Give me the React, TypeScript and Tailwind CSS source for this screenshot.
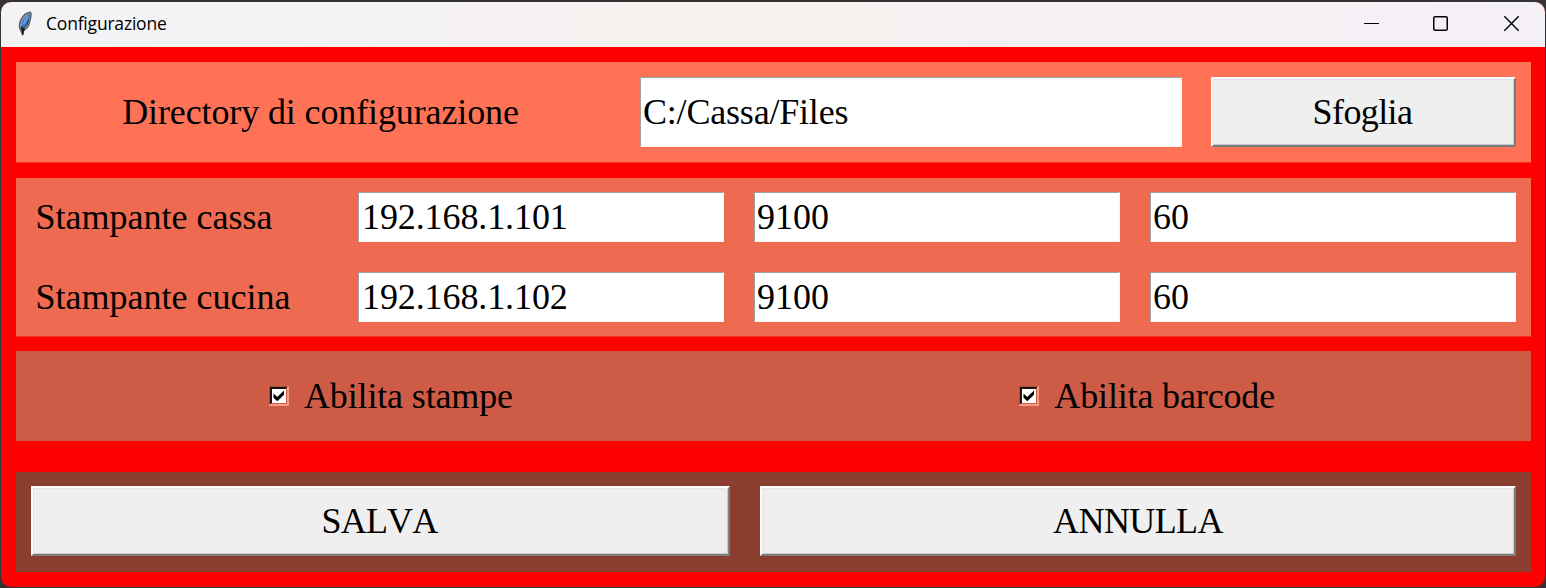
import { useState } from "react";

function Entry({ value, className }: { value: string; className: string }) {
  const [text, setText] = useState(value);
  return (
    <input
      value={text}
      onChange={(e) => setText(e.target.value)}
      className={`block min-w-0 rounded-none border border-t-[#a0a0a0] border-l-[#a0a0a0] border-r-[#fff4f0] border-b-[#fff4f0] bg-white text-[36px] leading-none text-black outline-none ${className}`}
    />
  );
}

function PushButton({ label, className }: { label: string; className: string }) {
  return (
    <button
      className={`flex items-center justify-center border-2 border-t-white border-l-white border-r-[#7c7c7c] border-b-[#7c7c7c] bg-[#efefef] text-[36px] leading-none text-black shadow-[inset_1px_1px_0_#e4e4e4,inset_-1px_-1px_0_#c8c8c8] ${className}`}
    >
      {label}
    </button>
  );
}

function CheckOption({ label }: { label: string }) {
  const [on, setOn] = useState(true);
  return (
    <button className="flex items-center text-[36px] leading-none tracking-[-0.15px] text-black" onClick={() => setOn(!on)}>
      <svg width="20" height="20" viewBox="0 0 20 20" className="mr-[15px]">
        <rect width="20" height="20" fill="#f59a88" />
        <path d="M0 19V0H19L18 1H1V18Z" fill="#a0523f" />
        <path d="M1 18V1H18V3H3V18Z" fill="#1c1210" />
        <rect x="3" y="3" width="14" height="14" fill="#fff" />
        <path d="M17 2V17H2V18H18V2Z" fill="#cd5b45" />
        {on && <path d="M4.5 7.5L8.3 11L15 4.5V8.7L8.3 15.2L4.5 11.8Z" fill="#000" />}
      </svg>
      <span>{label}</span>
    </button>
  );
}

function FeatherIcon() {
  return (
    <svg width="16" height="25" viewBox="0 0 16 25" className="relative -top-px">
      <path d="M13.6 1.2C9.4 1.6 5.6 5 3.7 9C1.9 13 1.9 17 3.8 19.6L5.6 23.6L6.8 19.4C10.8 17.6 12.4 14 13 10C13.5 7 15 4 13.6 1.2Z" fill="#8f989f" stroke="#55585b" strokeWidth="1.2" />
      <path d="M12.9 2.4C9.2 4.3 6 8 4.8 12L5.4 17.8C9.8 16 11.2 12 11.9 8.5C12.4 5.6 13.6 4.4 12.9 2.4Z" fill="#3576c6" />
      <path d="M11.6 3.8C8.8 6 6.8 9.2 5.8 12.8L7.6 13.2L11 7Z" fill="#5fa2ec" />
      <path d="M11.9 8.2C11 12 9.8 15 7 17" fill="none" stroke="#1f3957" strokeWidth="1" />
      <path d="M4.4 15.5L5.6 20.5L7.6 17.8" fill="#15181b" stroke="#15181b" strokeWidth="1.4" />
      <path d="M5.7 18V23.8" fill="none" stroke="#15181b" strokeWidth="1.6" />
    </svg>
  );
}

const printers = [
  { name: "Stampante cassa", ip: "192.168.1.101" },
  { name: "Stampante cucina", ip: "192.168.1.102" },
];

export default function App() {
  return (
    <div className="h-[588px] w-[1546px] overflow-hidden bg-[#343434] pt-[2px] pr-px pb-px pl-px font-['Liberation_Serif',serif] text-black">
      <div className="flex h-[585px] flex-col overflow-hidden rounded-[10px] bg-[#ff0000]">
        <header className="flex h-[45px] shrink-0 items-center bg-linear-to-r from-[#f3f3f6] via-[#f7f2ef] to-[#f4f0f7] pl-[16px]">
          <FeatherIcon />
          <span className="relative -top-px ml-[13px] font-['Open_Sans',sans-serif] text-[17.5px] tracking-[-0.2px]">Configurazione</span>
          <svg className="ml-auto" width="184" height="45" viewBox="0 0 184 45" fill="none" stroke="#000">
            <path d="M3 21.5H18" strokeWidth="1" />
            <rect x="72.75" y="14.75" width="13.5" height="13.5" rx="1.5" strokeWidth="1.5" />
            <path d="M143.3 14.3L157.7 28.7M157.7 14.3L143.3 28.7" strokeWidth="1.4" />
          </svg>
        </header>

        <section className="mt-[15px] mr-[14px] ml-[15px] flex h-[100px] shrink-0 items-start bg-[#ff7256] pt-[15px] shadow-[0_1px_0_#ff2e22]">
          <div className="flex h-[70px] w-[609px] items-center justify-center text-[36px] leading-none tracking-[-0.12px]">Directory di configurazione</div>
          <Entry value="C:/Cassa/Files" className="ml-[15px] h-[70px] w-[542px] pl-[2px] tracking-[-0.2px]" />
          <PushButton label="Sfoglia" className="ml-[29px] h-[70px] w-[305px] pr-[2px] tracking-[-0.6px]" />
        </section>

        <section className="mt-[16px] mr-[14px] ml-[15px] flex h-[158px] shrink-0 flex-col gap-[30px] bg-[#ee6a50] pt-[14px] shadow-[0_1px_0_#f7352a]">
          {printers.map((p) => (
            <div key={p.name} className="flex h-[50px] shrink-0">
              <div className="flex w-[342px] items-center pl-[19.5px] text-[36px] leading-none">{p.name}</div>
              <Entry value={p.ip} className="w-[366px] pl-[3px] tracking-[-0.1px]" />
              <Entry value="9100" className="ml-[30px] w-[366px] pl-[2px]" />
              <Entry value="60" className="ml-[30px] w-[366px] pl-[2px]" />
            </div>
          ))}
        </section>

        <section className="mt-[15px] mr-[14px] ml-[15px] flex h-[90px] shrink-0 items-center justify-between bg-[#cd5b45] pr-[256px] pl-[253px]">
          <CheckOption label="Abilita stampe" />
          <CheckOption label="Abilita barcode" />
        </section>

        <section className="mt-[31px] mr-[14px] ml-[15px] flex h-[100px] shrink-0 gap-[30px] bg-[#8b3e2f] pt-[14px] pl-[15px]">
          <PushButton label="SALVA" className="h-[70px] w-[699px] pr-[2px] tracking-[-0.8px] [font-kerning:none]" />
          <PushButton label="ANNULLA" className="h-[70px] w-[756px] tracking-[-0.6px]" />
        </section>
      </div>
    </div>
  );
}
